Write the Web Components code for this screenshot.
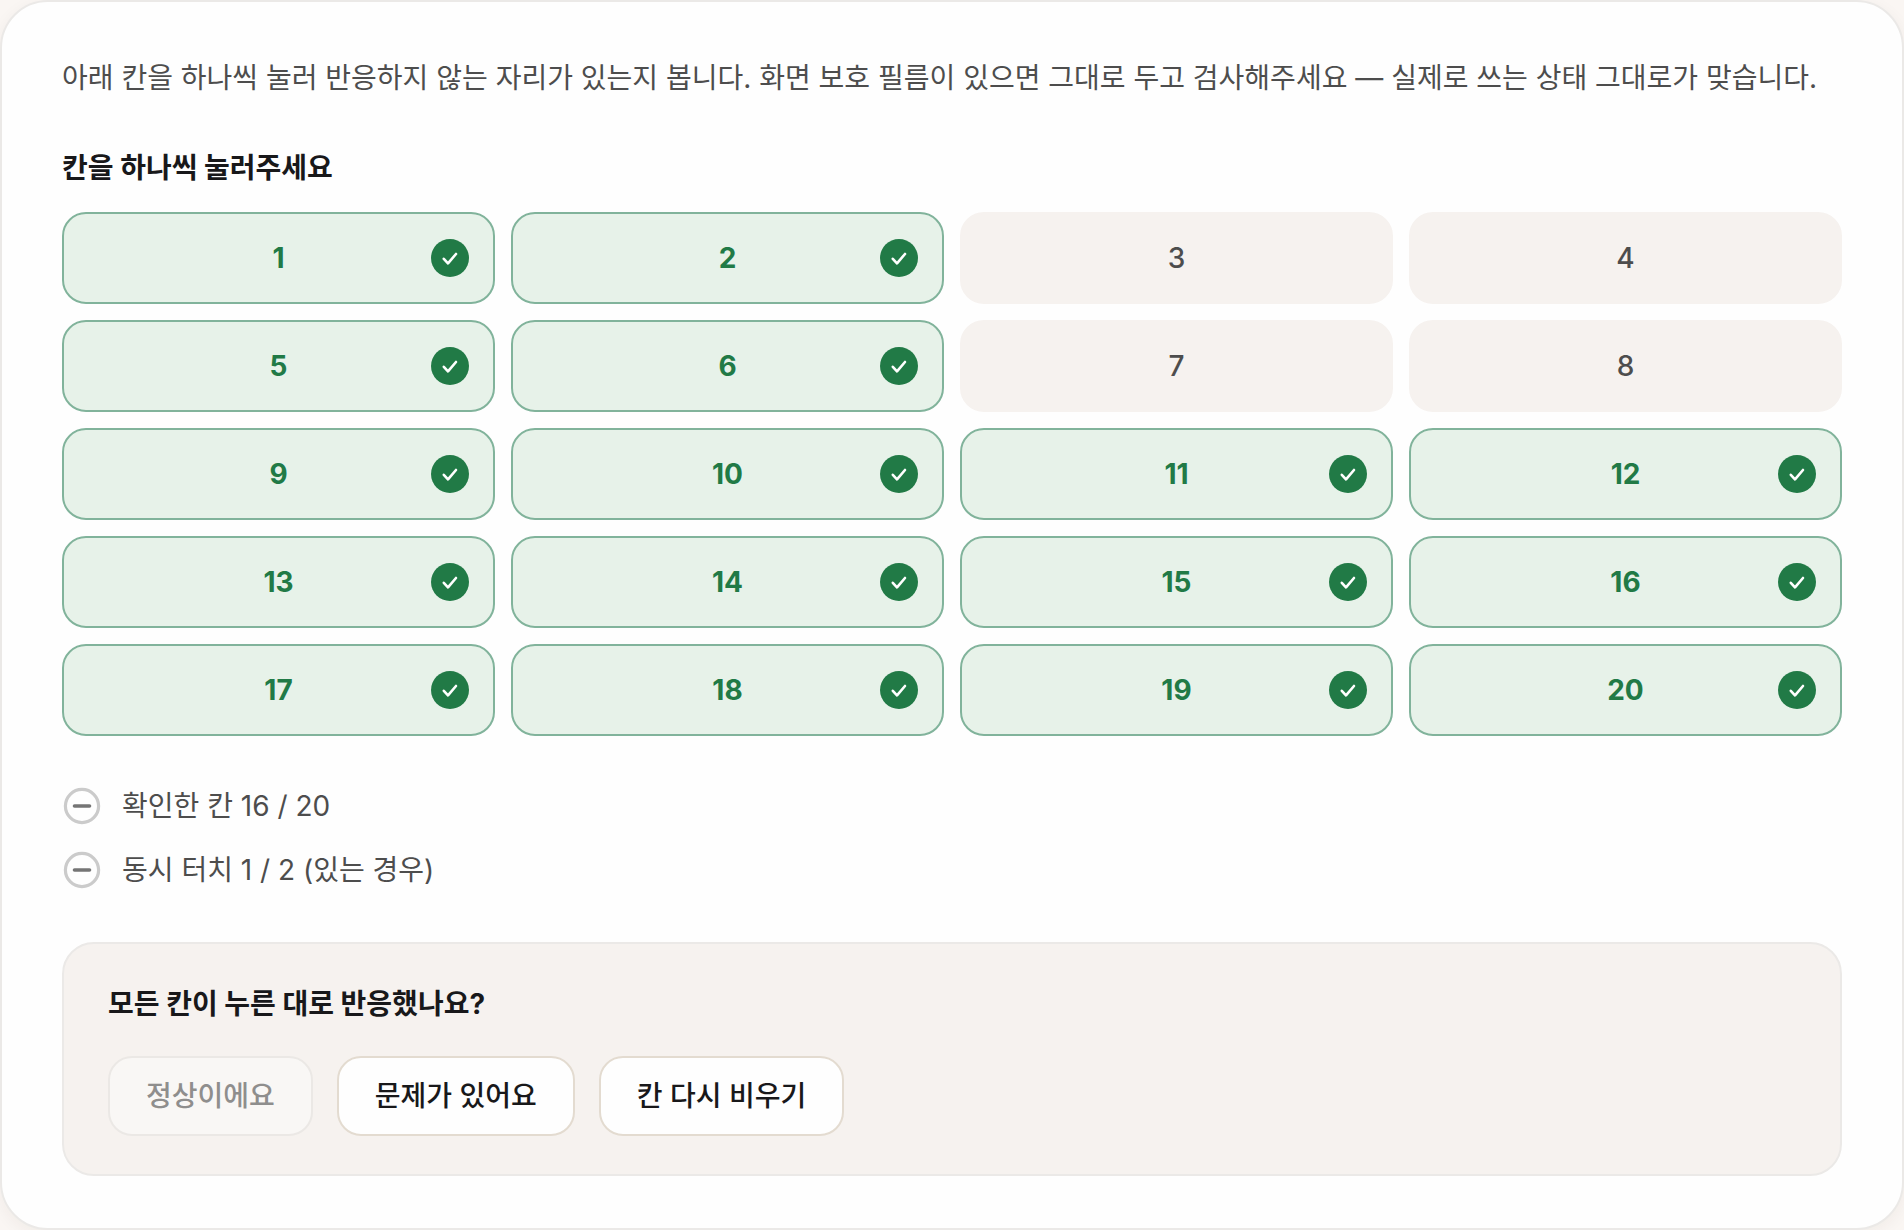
<!DOCTYPE html>
<html lang="ko">
<head>
<meta charset="utf-8">
<meta name="viewport" content="width=device-width, initial-scale=1">
<title>터치 검사</title>
<style>
  :root {
    --color-page: #faf6f3;
    --color-surface: #fefefe;
    --color-muted: #f6f2ef;
    --color-line: #ebe9e7;
    --color-line-strong: #e3dbd0;
    --color-text: #18181a;
    --color-text-soft: #4d4d4d;
    --color-ok: #217a46;
    --color-ok-line: #81b39b;
    --color-ok-bg: #e7f2e9;
    --radius-md: 24px;
    --radius-lg: 32px;
    --radius-xl: 48px;
  }

  body {
    margin: 0;
    background: var(--color-page);
    color: var(--color-text);
    font-family: Inter, "Noto Sans CJK KR", sans-serif;
    font-size: 28px;
    line-height: 40px;
  }
</style>
</head>
<body>
<touch-check></touch-check>

<script>
/**
 * Single touch cell, toggled by pressing it
 */
class TouchCell extends HTMLElement {
  constructor() {
    super();
    this.attachShadow({ mode: 'open' });
  }

  static get observedAttributes() {
    return ['number', 'checked'];
  }

  attributeChangedCallback() {
    this.render();
  }

  connectedCallback() {
    this.render();
    this.shadowRoot.addEventListener('click', () => {
      if (this.hasAttribute('checked')) return;
      this.setAttribute('checked', '');
      this.dispatchEvent(new CustomEvent('cell-change', { bubbles: true, composed: true }));
    });
  }

  render() {
    const checked = this.hasAttribute('checked');
    this.shadowRoot.innerHTML = `
      <style>
        :host {
          display: block;
        }

        button {
          display: grid;
          grid-template-columns: 1fr auto 1fr;
          align-items: center;
          box-sizing: border-box;
          width: 100%;
          height: 92px;
          padding: 0 24px;
          border: 2px solid var(--color-muted);
          border-radius: var(--radius-md);
          background: var(--color-muted);
          color: var(--color-text-soft);
          font: inherit;
          font-weight: 500;
          cursor: pointer;
        }

        button[aria-pressed="true"] {
          border-color: var(--color-ok-line);
          background: var(--color-ok-bg);
          color: var(--color-ok);
          font-weight: 700;
        }

        .number {
          grid-column: 2;
        }

        svg {
          justify-self: end;
          width: 38px;
          height: 38px;
        }
      </style>
      <button type="button" aria-pressed="${checked}">
        <span class="number">${this.getAttribute('number')}</span>
        ${checked ? `
          <svg viewBox="0 0 38 38" aria-hidden="true">
            <circle cx="19" cy="19" r="19" fill="#217a46"/>
            <path d="M12.8 19.8l4.2 4.6 8-9.4" fill="none" stroke="#fff" stroke-width="2.6" stroke-linecap="round" stroke-linejoin="round"/>
          </svg>` : ''}
      </button>
    `;
  }
}

/**
 * Status row with a pending mark
 */
class StatusItem extends HTMLElement {
  constructor() {
    super();
    this.attachShadow({ mode: 'open' });
  }

  connectedCallback() {
    this.shadowRoot.innerHTML = `
      <style>
        :host {
          display: flex;
          align-items: center;
          gap: 20px;
          color: var(--color-text-soft);
        }

        svg {
          flex: none;
          width: 40px;
          height: 40px;
        }
      </style>
      <svg viewBox="0 0 40 40" aria-hidden="true">
        <circle cx="20" cy="20" r="16.6" fill="none" stroke="#cbcbcb" stroke-width="3.2"/>
        <path d="M12.5 20h15" fill="none" stroke="#757575" stroke-width="3.6" stroke-linecap="round"/>
      </svg>
      <span><slot></slot></span>
    `;
  }
}

/**
 * Answer button
 */
class ActionButton extends HTMLElement {
  constructor() {
    super();
    this.attachShadow({ mode: 'open' });
  }

  connectedCallback() {
    this.shadowRoot.innerHTML = `
      <style>
        :host {
          display: block;
        }

        button {
          box-sizing: border-box;
          height: 80px;
          padding: 0 36px;
          border: 2px solid var(--color-line-strong);
          border-radius: var(--radius-md);
          background: var(--color-surface);
          color: var(--color-text);
          font: inherit;
          font-weight: 500;
          cursor: pointer;
        }

        button:disabled {
          border-color: #ebe8e5;
          background: #f9f7f5;
          color: #8f8e8d;
          cursor: not-allowed;
        }
      </style>
      <button type="button" ${this.hasAttribute('disabled') ? 'disabled' : ''}><slot></slot></button>
    `;
  }
}

/**
 * Question box with a row of answers
 */
class QuestionPanel extends HTMLElement {
  constructor() {
    super();
    this.attachShadow({ mode: 'open' });
  }

  connectedCallback() {
    this.shadowRoot.innerHTML = `
      <style>
        :host {
          display: block;
          padding: 40px 44px 38px;
          border: 2px solid var(--color-line);
          border-radius: var(--radius-lg);
          background: var(--color-muted);
        }

        .actions {
          display: flex;
          flex-wrap: wrap;
          gap: 24px;
          margin-top: 32px;
        }
      </style>
      <slot name="title"></slot>
      <div class="actions"><slot></slot></div>
    `;
  }
}

/**
 * Touch test card
 */
class TouchCheck extends HTMLElement {
  constructor() {
    super();
    this.attachShadow({ mode: 'open' });
    this._total = 20;
    this._pending = [3, 4, 7, 8];
  }

  connectedCallback() {
    this.render();
    this.attachEventListeners();
  }

  render() {
    let cells = '';
    for (let i = 1; i <= this._total; i++) {
      cells += `<touch-cell number="${i}" ${this._pending.includes(i) ? '' : 'checked'}></touch-cell>`;
    }

    this.shadowRoot.innerHTML = `
      <style>
        :host {
          display: block;
          padding: 56px 60px 52px;
          border: 2px solid var(--color-line);
          border-radius: var(--radius-xl);
          background: var(--color-surface);
          box-shadow: 0 4px 16px rgb(60 40 20 / 0.05);
        }

        p {
          margin: 0 0 50px;
          color: var(--color-text-soft);
        }

        h2, h3 {
          margin: 0;
          font-size: 28px;
          font-weight: 700;
        }

        .grid {
          display: grid;
          grid-template-columns: repeat(4, 1fr);
          gap: 16px;
          margin-top: 24px;
        }

        .status {
          display: flex;
          flex-direction: column;
          gap: 24px;
          margin: 50px 0 52px;
        }
      </style>
      <p>아래 칸을 하나씩 눌러 반응하지 않는 자리가 있는지 봅니다. 화면 보호 필름이 있으면 그대로 두고 검사해주세요 — 실제로 쓰는 상태 그대로가 맞습니다.</p>
      <h2>칸을 하나씩 눌러주세요</h2>
      <div class="grid">${cells}</div>
      <div class="status">
        <status-item id="count"></status-item>
        <status-item>동시 터치 1 / 2 (있는 경우)</status-item>
      </div>
      <question-panel>
        <h3 slot="title">모든 칸이 누른 대로 반응했나요?</h3>
        <action-button disabled>정상이에요</action-button>
        <action-button>문제가 있어요</action-button>
        <action-button id="reset">칸 다시 비우기</action-button>
      </question-panel>
    `;
    this.updateCount();
  }

  attachEventListeners() {
    this.shadowRoot.addEventListener('cell-change', () => this.updateCount());
    this.shadowRoot.querySelector('#reset').addEventListener('click', () => {
      this.shadowRoot.querySelectorAll('touch-cell').forEach((cell) => cell.removeAttribute('checked'));
      this.updateCount();
    });
  }

  updateCount() {
    const done = this.shadowRoot.querySelectorAll('touch-cell[checked]').length;
    this.shadowRoot.querySelector('#count').textContent = `확인한 칸 ${done} / ${this._total}`;
  }
}

customElements.define('touch-cell', TouchCell);
customElements.define('status-item', StatusItem);
customElements.define('action-button', ActionButton);
customElements.define('question-panel', QuestionPanel);
customElements.define('touch-check', TouchCheck);
</script>
</body>
</html>
